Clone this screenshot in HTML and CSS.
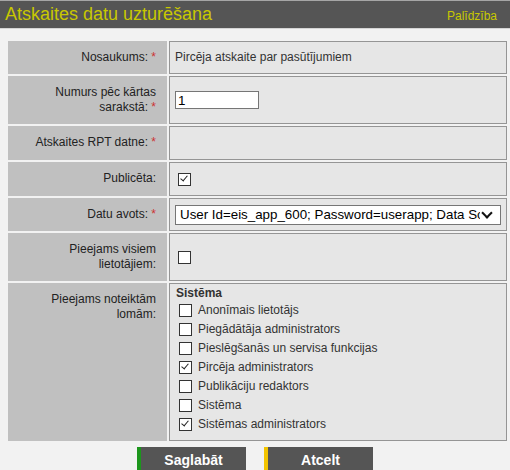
FILE: index.html
```html
<!DOCTYPE html>
<html>
<head>
    <title>Atskaites datu uzturēšana</title>
    <link rel="stylesheet" href="styles.css">
</head>
<body>
    <div class="page">
        <div class="header">
            <h1>Atskaites datu uzturēšana</h1>
            <a class="help" href="#">Palīdzība</a>
        </div>

        <table class="form">
            <tr>
                <td class="label required">Nosaukums:</td>
                <td class="value">Pircēja atskaite par pasūtījumiem</td>
            </tr>
            <tr>
                <td class="label required">Numurs pēc kārtas sarakstā:</td>
                <td class="value"><input class="text" type="text" value="1"></td>
            </tr>
            <tr class="row-tall">
                <td class="label required">Atskaites RPT datne:</td>
                <td class="value"></td>
            </tr>
            <tr class="row-tall">
                <td class="label">Publicēta:</td>
                <td class="value"><input class="check" type="checkbox" checked></td>
            </tr>
            <tr>
                <td class="label required">Datu avots:</td>
                <td class="value">
                    <span class="select-wrap">
                        <select class="select">
                            <option>User Id=eis_app_600; Password=userapp; Data Source=eis</option>
                        </select>
                    </span>
                </td>
            </tr>
            <tr>
                <td class="label">Pieejams visiem lietotājiem:</td>
                <td class="value"><input class="check" type="checkbox"></td>
            </tr>
            <tr>
                <td class="label top">Pieejams noteiktām lomām:</td>
                <td class="value roles">
                    <div class="group-title">Sistēma</div>
                    <label class="role"><input class="check" type="checkbox"> Anonīmais lietotājs</label>
                    <label class="role"><input class="check" type="checkbox"> Piegādātāja administrators</label>
                    <label class="role"><input class="check" type="checkbox"> Pieslēgšanās un servisa funkcijas</label>
                    <label class="role"><input class="check" type="checkbox" checked> Pircēja administrators</label>
                    <label class="role"><input class="check" type="checkbox"> Publikāciju redaktors</label>
                    <label class="role"><input class="check" type="checkbox"> Sistēma</label>
                    <label class="role"><input class="check" type="checkbox" checked> Sistēmas administrators</label>
                </td>
            </tr>
        </table>
    </div>

    <div class="buttons">
        <button class="btn save">Saglabāt</button>
        <button class="btn cancel">Atcelt</button>
    </div>
</body>
</html>
```

FILE: styles.css
```css
body {
    margin: 0;
    background-color: #f2f2f2;
    font-family: "Liberation Sans", Arial, sans-serif;
    font-size: 12px;
    color: #333;
}

.page {
    background-color: #f2f2f2;
    padding-bottom: 2px;
}

.header {
    display: flex;
    justify-content: space-between;
    align-items: baseline;
    height: 27px;
    background-color: #555;
    border-top: 1px solid #a6a6a6;
    border-bottom: 1px solid #d4d4d4;
    padding: 0 13px 0 5px;
}

.header h1 {
    margin: 0;
    font-size: 18px;
    font-weight: normal;
    line-height: 26px;
    color: #c8c800;
}

.help {
    font-size: 12px;
    color: #c8c800;
    text-decoration: none;
}

.form {
    border-collapse: separate;
    border-spacing: 2px;
    width: 503px;
    margin: 10px 0 0 6px;
}

.form td {
    line-height: 15px;
}

.label {
    width: 139px;
    padding: 9px 11px 9px 9px;
    background-color: #c0c0c0;
    color: #222;
    text-align: right;
    vertical-align: middle;
}

.row-tall .label {
    padding-bottom: 10px;
}

.label.top {
    vertical-align: top;
}

.label.required::after {
    content: " *";
    color: #c33;
}

.value {
    padding: 3px 5px;
    background-color: #e6e6e6;
    border: 1px solid #959595;
    vertical-align: middle;
}

.text {
    box-sizing: border-box;
    width: 84px;
    height: 18px;
    margin: 0;
    padding: 0 2px;
    border: 1px solid #767676;
    font-family: "Liberation Sans", Arial, sans-serif;
    font-size: 13.33px;
    color: #000;
    display: block;
}

.check {
    appearance: none;
    position: relative;
    width: 13px;
    height: 13px;
    margin: 0 0 0 3px;
    border: 1px solid #333;
    background-color: #fff;
    vertical-align: middle;
    display: block;
}

.check:checked::after {
    content: "";
    position: absolute;
    left: 3px;
    top: 0;
    width: 3px;
    height: 6px;
    border: solid #222;
    border-width: 0 1.5px 1.5px 0;
    transform: rotate(40deg);
}

.select-wrap {
    position: relative;
    display: block;
    width: 326px;
}

.select-wrap::after {
    content: "";
    position: absolute;
    right: 10px;
    top: 4px;
    width: 6px;
    height: 6px;
    border: solid #111;
    border-width: 0 2px 2px 0;
    transform: rotate(45deg);
    pointer-events: none;
}

.select {
    appearance: none;
    box-sizing: border-box;
    width: 326px;
    height: 20px;
    margin: 0;
    padding: 0 20px 0 4px;
    border: 1px solid #767676;
    border-radius: 0;
    background-color: #fff;
    font-family: "Liberation Sans", Arial, sans-serif;
    font-size: 13.33px;
    color: #000;
    display: block;
}

.roles {
    vertical-align: top;
    padding: 2px 5px 6px 6px;
}

.group-title {
    font-weight: bold;
    line-height: 15px;
}

.role {
    display: flex;
    align-items: center;
    gap: 6px;
    height: 19px;
}

.buttons {
    display: flex;
    justify-content: center;
    gap: 18px;
    padding-top: 2px;
    background-color: #f2f2f2;
}

.btn {
    width: 109px;
    height: 26px;
    border: none;
    border-left: 4px solid;
    background-color: #555;
    color: #fff;
    font-family: "Liberation Sans", Arial, sans-serif;
    font-size: 14px;
    font-weight: bold;
    cursor: pointer;
}

.save {
    border-left-color: #1c961c;
}

.cancel {
    border-left-color: #f2c400;
}
```
